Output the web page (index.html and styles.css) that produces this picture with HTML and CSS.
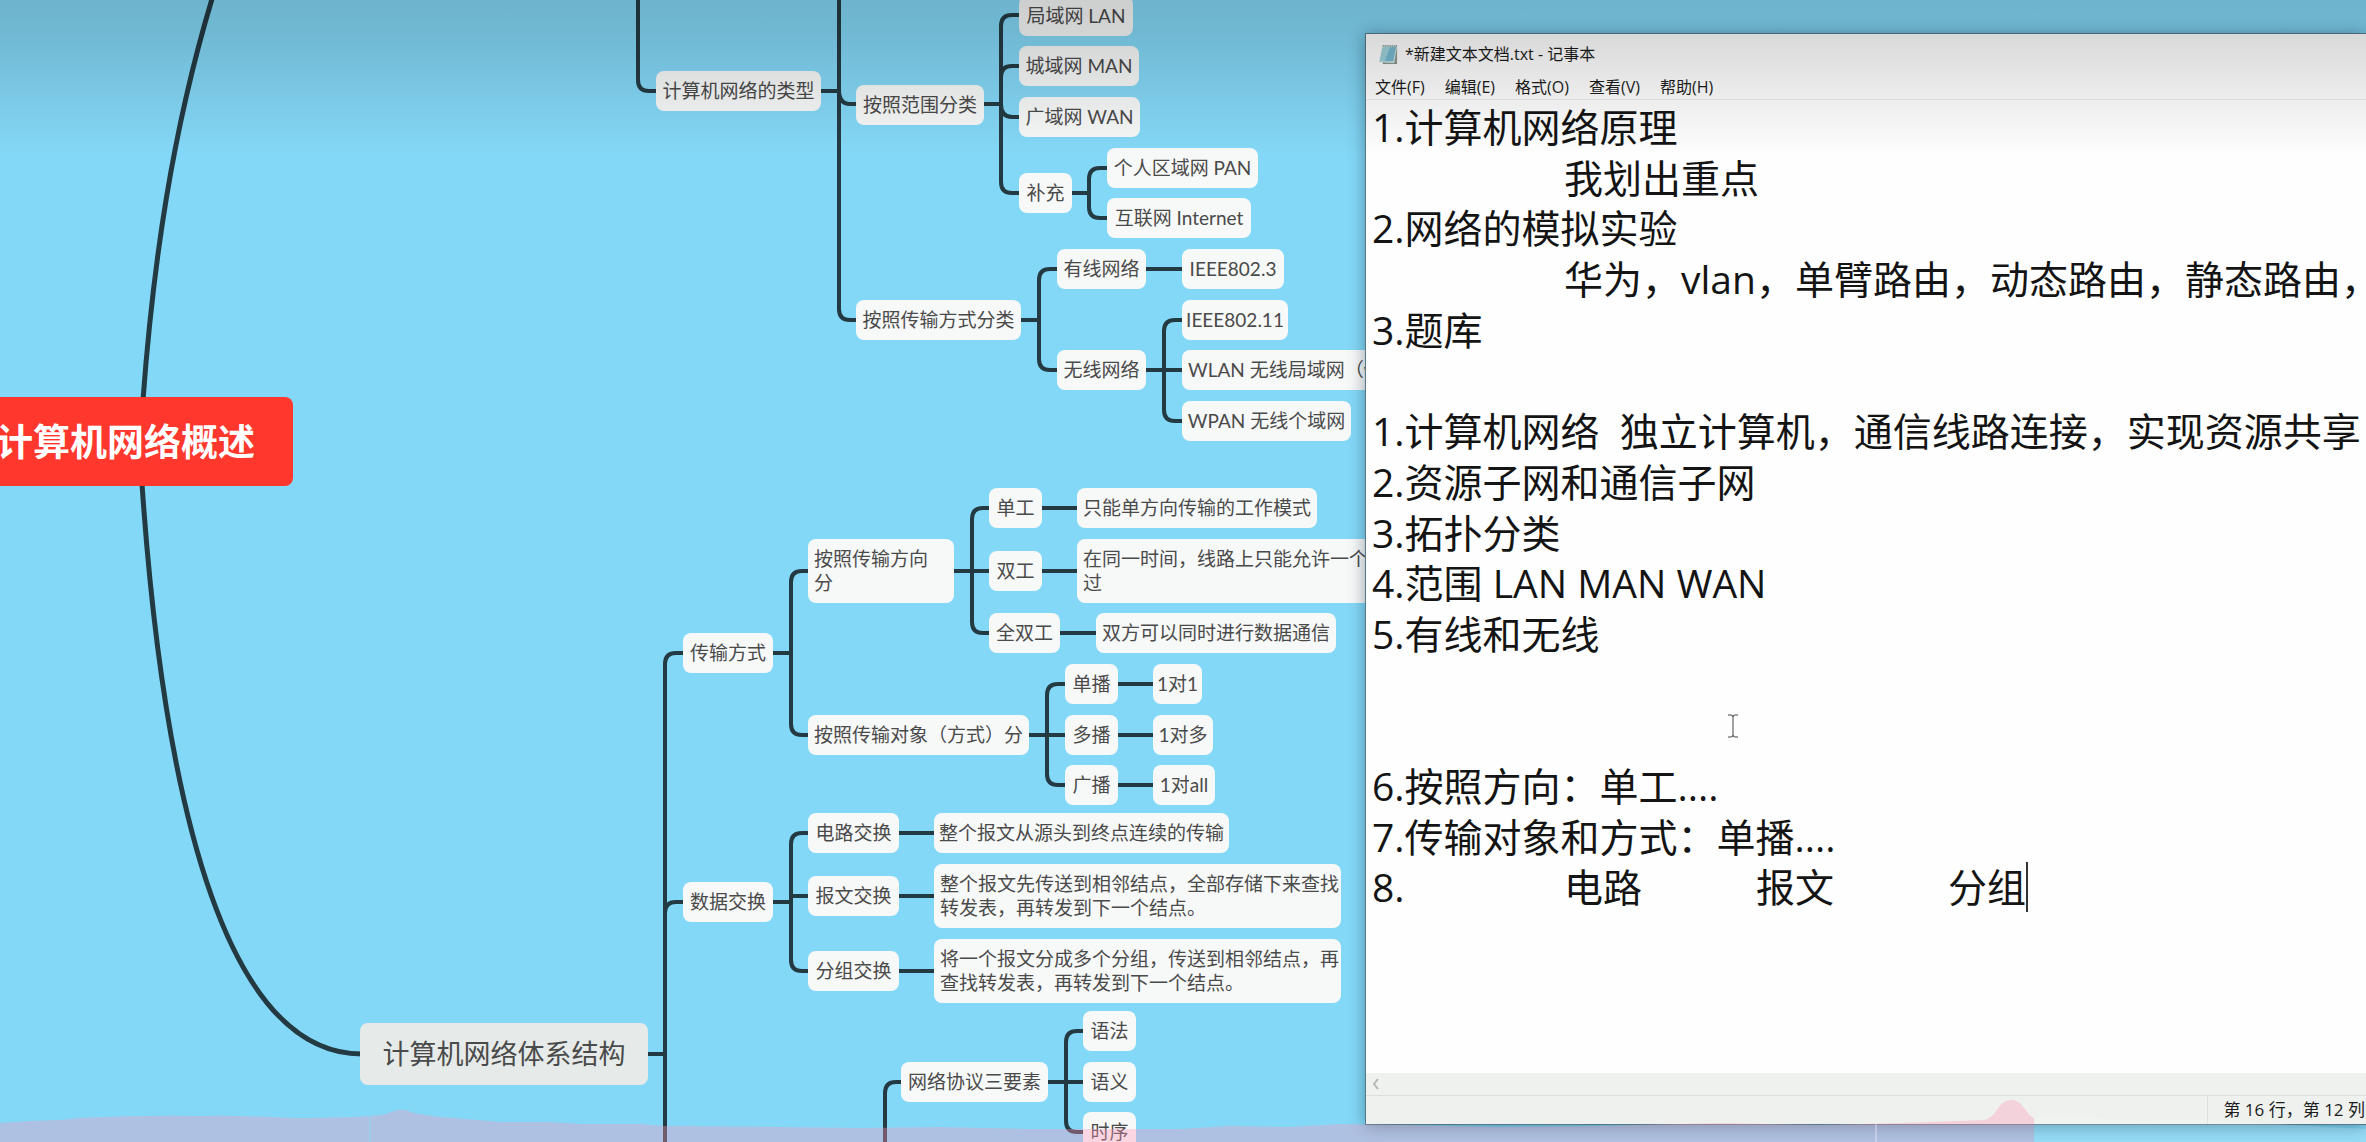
FILE: index.html
```html
<!DOCTYPE html>
<html lang="zh-CN">
<head>
<meta charset="utf-8">
<title>计算机网络概述</title>
<link rel="stylesheet" href="styles.css">
</head>
<body>
<main class="desktop">
  <section class="map" aria-label="思维导图">
    <svg class="links" aria-hidden="true">
      <g class="trunk">
        <path d="M212 -1C172 132 153 265 143 400"/>
        <path d="M142 484C165 820 230 1054 362 1054"/>
      </g>
      <g class="branch">
        <path d="M638 0V80Q638 91 649 91H658"/>
        <path d="M820 91H839M839 0V309Q839 320 850 320H858M839 90Q839 104 850 104H858"/>
        <path d="M983 104H1001M1020 15H1012Q1001 15 1001 26V182Q1001 193 1012 193H1020M1020 66H1012Q1001 66 1001 77M1001 104Q1001 117 1012 117H1020"/>
        <path d="M1071 193H1089M1108 168H1100Q1089 168 1089 179V207Q1089 218 1100 218H1108"/>
        <path d="M1020 320H1039M1058 269H1050Q1039 269 1039 280V359Q1039 370 1050 370H1058"/>
        <path d="M1145 269H1183M1145 370H1183M1183 320H1175Q1164 320 1164 331V410Q1164 421 1175 421H1183"/>
        <path d="M684 653H676Q665 653 665 664V1142M647 1054H665M665 913Q665 902 676 902H684"/>
        <path d="M772 653H791M809 571H802Q791 571 791 582V724Q791 735 802 735H809"/>
        <path d="M953 571H990M990 508H983Q972 508 972 519V622Q972 633 983 633H990"/>
        <path d="M1041 508H1078M1041 571H1078M1059 633H1097"/>
        <path d="M1028 735H1066M1066 684H1058Q1047 684 1047 695V774Q1047 785 1058 785H1066"/>
        <path d="M1117 684H1154M1117 735H1154M1117 785H1154"/>
        <path d="M772 902H791M809 833H802Q791 833 791 844V960Q791 971 802 971H809M791 896H809"/>
        <path d="M898 833H935M898 896H935M898 971H935"/>
        <path d="M902 1082H896Q885 1082 885 1093V1142"/>
        <path d="M1047 1082H1084M1084 1031H1077Q1066 1031 1066 1042V1121Q1066 1132 1077 1132H1084"/>
      </g>
    </svg>

    <div class="node root">计算机网络概述</div>
    <div class="node topic">计算机网络体系结构</div>

    <div class="node n-types">计算机网络的类型</div>
    <div class="node n-range">按照范围分类</div>
    <div class="node n-lan">局域网 LAN</div>
    <div class="node n-man">城域网 MAN</div>
    <div class="node n-wan">广域网 WAN</div>
    <div class="node n-extra">补充</div>
    <div class="node n-pan">个人区域网 PAN</div>
    <div class="node n-internet">互联网 Internet</div>
    <div class="node n-medium">按照传输方式分类</div>
    <div class="node n-wired">有线网络</div>
    <div class="node n-8023">IEEE802.3</div>
    <div class="node n-wireless">无线网络</div>
    <div class="node n-80211">IEEE802.11</div>
    <div class="node long n-wlan">WLAN 无线局域网（w</div>
    <div class="node n-wpan">WPAN 无线个域网</div>

    <div class="node n-mode">传输方式</div>
    <div class="node long n-direction">按照传输方向<br>分</div>
    <div class="node n-simplex">单工</div>
    <div class="node n-simplex-note">只能单方向传输的工作模式</div>
    <div class="node n-half">双工</div>
    <div class="node long n-half-note">在同一时间，线路上只能允许一个<br>过</div>
    <div class="node n-full">全双工</div>
    <div class="node n-full-note">双方可以同时进行数据通信</div>
    <div class="node n-target">按照传输对象（方式）分</div>
    <div class="node n-unicast">单播</div>
    <div class="node n-one">1对1</div>
    <div class="node n-multicast">多播</div>
    <div class="node n-many">1对多</div>
    <div class="node n-broadcast">广播</div>
    <div class="node n-all">1对all</div>

    <div class="node n-exchange">数据交换</div>
    <div class="node n-circuit">电路交换</div>
    <div class="node n-circuit-note">整个报文从源头到终点连续的传输</div>
    <div class="node n-message">报文交换</div>
    <div class="node long n-message-note">整个报文先传送到相邻结点，全部存储下来查找<br>转发表，再转发到下一个结点。</div>
    <div class="node n-packet">分组交换</div>
    <div class="node long n-packet-note">将一个报文分成多个分组，传送到相邻结点，再<br>查找转发表，再转发到下一个结点。</div>

    <div class="node n-protocol">网络协议三要素</div>
    <div class="node n-syntax">语法</div>
    <div class="node n-semantics">语义</div>
    <div class="node n-timing">时序</div>
  </section>

  <section class="notepad" aria-label="记事本">
    <header class="titlebar">
      <svg class="app-icon" viewBox="0 0 22 22" aria-hidden="true">
        <path d="M5 3L20 3L20 21L5 21Z" fill="#8b9a92"/>
        <path d="M4 3L20 2L17 20L1 19Z" fill="#d4e9e8"/>
        <path d="M5 4L19 3L16 18L2 18Z" fill="#76b9cf"/>
        <path d="M5 4L13 3L7 18L2 18Z" fill="#9ed2dc"/>
        <path d="M5 2H20" stroke="#6d8780" stroke-width="2" stroke-dasharray="1 1"/>
      </svg>
      <h1 class="title">*新建文本文档.txt - 记事本</h1>
    </header>
    <nav class="menu">
      <button type="button">文件(F)</button>
      <button type="button">编辑(E)</button>
      <button type="button">格式(O)</button>
      <button type="button">查看(V)</button>
      <button type="button">帮助(H)</button>
    </nav>
    <div class="editor">
      <textarea class="text" wrap="off" spellcheck="false" aria-label="文本内容">1.计算机网络原理
	我划出重点
2.网络的模拟实验
	华为，vlan，单臂路由，动态路由，静态路由，
3.题库

1.计算机网络  独立计算机，通信线路连接，实现资源共享
2.资源子网和通信子网
3.拓扑分类
4.范围 LAN MAN WAN
5.有线和无线


6.按照方向：单工....
7.传输对象和方式：单播....
8.	电路	报文	分组</textarea>
      <span class="caret"></span>
      <svg class="ibeam" viewBox="0 0 12 24" aria-hidden="true">
        <path d="M1 1H4Q6 1 6 3Q6 1 8 1H11M6 3V21M1 23H4Q6 23 6 21Q6 23 8 23H11"/>
      </svg>
    </div>
    <div class="scroll">
      <svg class="chevron" viewBox="0 0 8 12" aria-hidden="true"><path d="M6 1L2 6L6 11"/></svg>
    </div>
    <footer class="status"><span class="position">第 16 行，第 12 列</span></footer>
  </section>

  <div class="shade"></div>
  <svg class="wave" aria-hidden="true">
    <path class="played" d="M0 23L30 21L60 20L80 18Q140 15 200 16Q240 15 290 18Q340 18 370 16Q386 15 391 12Q402 7 414 13Q424 15 440 17Q470 19 500 22L550 22L580 24L640 24L665 26L780 27L860 28L940 27L1025 29L1180 29L1230 26L1290 27L1340 24L1500 27L1600 26L1720 23L1820 25L1900 23L1985 20Q1992 18 1999 7Q2004 0 2012 0Q2019 0 2025 9Q2030 17 2034 18V42H0Z"/>
    <path class="ahead" d="M2034 18Q2065 13 2100 18Q2130 23 2180 19Q2230 21 2290 25L2366 29V42H2034Z"/>
    <path class="mark" d="M1876 24V42"/>
    <path class="mark cyan" d="M370 16V42"/>
  </svg>
</main>
</body>
</html>
```
FILE: styles.css
```css
* { box-sizing: border-box; }

body {
  margin: 0;
  overflow: hidden;
  font-family: "Open Sans", "Noto Sans CJK SC", sans-serif;
}

.desktop {
  position: relative;
  height: 100vh;
  overflow: hidden;
  background: #84d8f7;
}

/* ---------- mind map ---------- */

.map {
  position: absolute;
  inset: 0;
  font-family: Lato, "Noto Sans CJK SC", sans-serif;
  font-size: 19px;
  line-height: 24px;
  color: #4a4a4a;
}

.links {
  position: absolute;
  inset: 0;
  width: 100%;
  height: 100%;
  fill: none;
  stroke: #243a43;
}

.trunk { stroke-width: 5px; }
.branch { stroke-width: 4px; }

.node {
  position: absolute;
  display: flex;
  justify-content: center;
  padding: 8px 0;
  border-radius: 8px;
  background: #f7f8f8;
  white-space: nowrap;
}

.node.long {
  justify-content: flex-start;
  padding: 8px 6px;
}

.root {
  left: -42px;
  top: 397px;
  width: 335px;
  padding: 20px 0;
  background: #ff372c;
  color: #fff;
  font-size: 37px;
  font-weight: 700;
  line-height: 49px;
}

.topic {
  left: 360px;
  top: 1023px;
  width: 288px;
  padding: 15px 0;
  background: #e6eae8;
  font-size: 27px;
  line-height: 32px;
}

.n-types { left: 656px; top: 71px; width: 165px; }
.n-range { left: 856px; top: 85px; width: 128px; }
.n-lan { left: 1019px; top: -4px; width: 114px; }
.n-man { left: 1019px; top: 46px; width: 120px; }
.n-wan { left: 1019px; top: 97px; width: 121px; }
.n-extra { left: 1019px; top: 173px; width: 53px; }
.n-pan { left: 1107px; top: 148px; width: 151px; }
.n-internet { left: 1107px; top: 198px; width: 144px; }
.n-medium { left: 856px; top: 300px; width: 165px; }
.n-wired { left: 1057px; top: 249px; width: 89px; }
.n-8023 { left: 1182px; top: 249px; width: 102px; }
.n-wireless { left: 1057px; top: 350px; width: 89px; }
.n-80211 { left: 1182px; top: 300px; width: 106px; }
.n-wlan { left: 1182px; top: 350px; width: 240px; }
.n-wpan { left: 1182px; top: 401px; width: 169px; }

.n-mode { left: 683px; top: 633px; width: 90px; }
.n-direction { left: 808px; top: 539px; width: 146px; }
.n-simplex { left: 989px; top: 488px; width: 53px; }
.n-simplex-note { left: 1077px; top: 488px; width: 240px; }
.n-half { left: 989px; top: 551px; width: 53px; }
.n-half-note { left: 1077px; top: 539px; width: 400px; }
.n-full { left: 989px; top: 613px; width: 71px; }
.n-full-note { left: 1096px; top: 613px; width: 240px; }
.n-target { left: 808px; top: 715px; width: 221px; }
.n-unicast { left: 1065px; top: 664px; width: 53px; }
.n-one { left: 1153px; top: 664px; width: 49px; }
.n-multicast { left: 1065px; top: 715px; width: 53px; }
.n-many { left: 1153px; top: 715px; width: 60px; }
.n-broadcast { left: 1065px; top: 765px; width: 53px; }
.n-all { left: 1153px; top: 765px; width: 62px; }

.n-exchange { left: 683px; top: 882px; width: 90px; }
.n-circuit { left: 808px; top: 813px; width: 91px; }
.n-circuit-note { left: 934px; top: 813px; width: 295px; }
.n-message { left: 808px; top: 876px; width: 91px; }
.n-message-note { left: 934px; top: 864px; width: 407px; }
.n-packet { left: 808px; top: 951px; width: 91px; }
.n-packet-note { left: 934px; top: 939px; width: 407px; }

.n-protocol { left: 901px; top: 1062px; width: 147px; }
.n-syntax { left: 1083px; top: 1011px; width: 53px; }
.n-semantics { left: 1083px; top: 1062px; width: 53px; }
.n-timing { left: 1083px; top: 1112px; width: 53px; }

/* ---------- notepad window ---------- */

.notepad {
  position: absolute;
  left: 1365px;
  top: 33px;
  right: 0;
  bottom: 17px;
  display: flex;
  flex-direction: column;
  border: 1px solid #56798a;
  border-right: 0;
  background: #fdfefd;
  box-shadow: 0 2px 16px rgba(0, 30, 50, 0.4);
  color: #1c1c1c;
}

.titlebar {
  display: flex;
  align-items: center;
  gap: 6px;
  height: 40px;
  padding-left: 12px;
}

.app-icon {
  width: 21px;
  height: 21px;
}

.title {
  margin: 0;
  font-size: 16px;
  font-weight: 400;
  line-height: 24px;
}

.menu {
  display: flex;
  align-items: center;
  gap: 20px;
  height: 26px;
  padding-left: 9px;
  border-bottom: 1px solid #ececec;
}

.menu button {
  padding: 0;
  border: 0;
  background: none;
  color: inherit;
  font: 16px/24px "Open Sans", "Noto Sans CJK SC", sans-serif;
}

.editor {
  position: relative;
  flex: 1;
  display: flex;
  min-height: 0;
}

.text {
  flex: 1;
  padding: 2px 0 0 6px;
  border: 0;
  outline: 0;
  resize: none;
  overflow: hidden;
  background: none;
  color: #141414;
  font-family: "Open Sans", "Noto Sans CJK SC", sans-serif;
  font-size: 39px;
  line-height: 1.3;
  tab-size: 192px;
  white-space: pre;
}

.caret {
  position: absolute;
  left: 660px;
  top: 762px;
  width: 2px;
  height: 50px;
  background: #333;
}

.ibeam {
  position: absolute;
  left: 361px;
  top: 614px;
  width: 12px;
  height: 24px;
  fill: none;
  stroke: #444;
}

.scroll {
  display: flex;
  align-items: center;
  height: 22px;
  padding-left: 6px;
  background: #eff1ef;
}

.chevron {
  width: 8px;
  height: 12px;
  fill: none;
  stroke: #b4b6b4;
  stroke-width: 2px;
}

.status {
  display: flex;
  justify-content: flex-end;
  height: 29px;
  border-top: 1px solid #dcdedc;
  background: #eff1ef;
}

.position {
  padding: 0 1px 0 15px;
  border-left: 1px solid #dcdedc;
  font-size: 17px;
  line-height: 28px;
  white-space: nowrap;
}

/* ---------- player overlays ---------- */

.shade {
  position: absolute;
  inset: 0 0 auto;
  height: 156px;
  background: linear-gradient(rgba(0, 0, 0, 0.17), rgba(0, 0, 0, 0.15) 20%, rgba(0, 0, 0, 0.07) 62%, transparent);
  pointer-events: none;
}

.wave {
  position: absolute;
  left: 0;
  bottom: 0;
  width: 100%;
  height: 42px;
  pointer-events: none;
}

.played { fill: rgba(255, 152, 186, 0.35); }
.ahead { fill: rgba(255, 255, 255, 0.15); }
.mark { fill: none; stroke: rgba(255, 255, 255, 0.6); stroke-width: 1px; }
.cyan { stroke: #8fd6f4; }
```
